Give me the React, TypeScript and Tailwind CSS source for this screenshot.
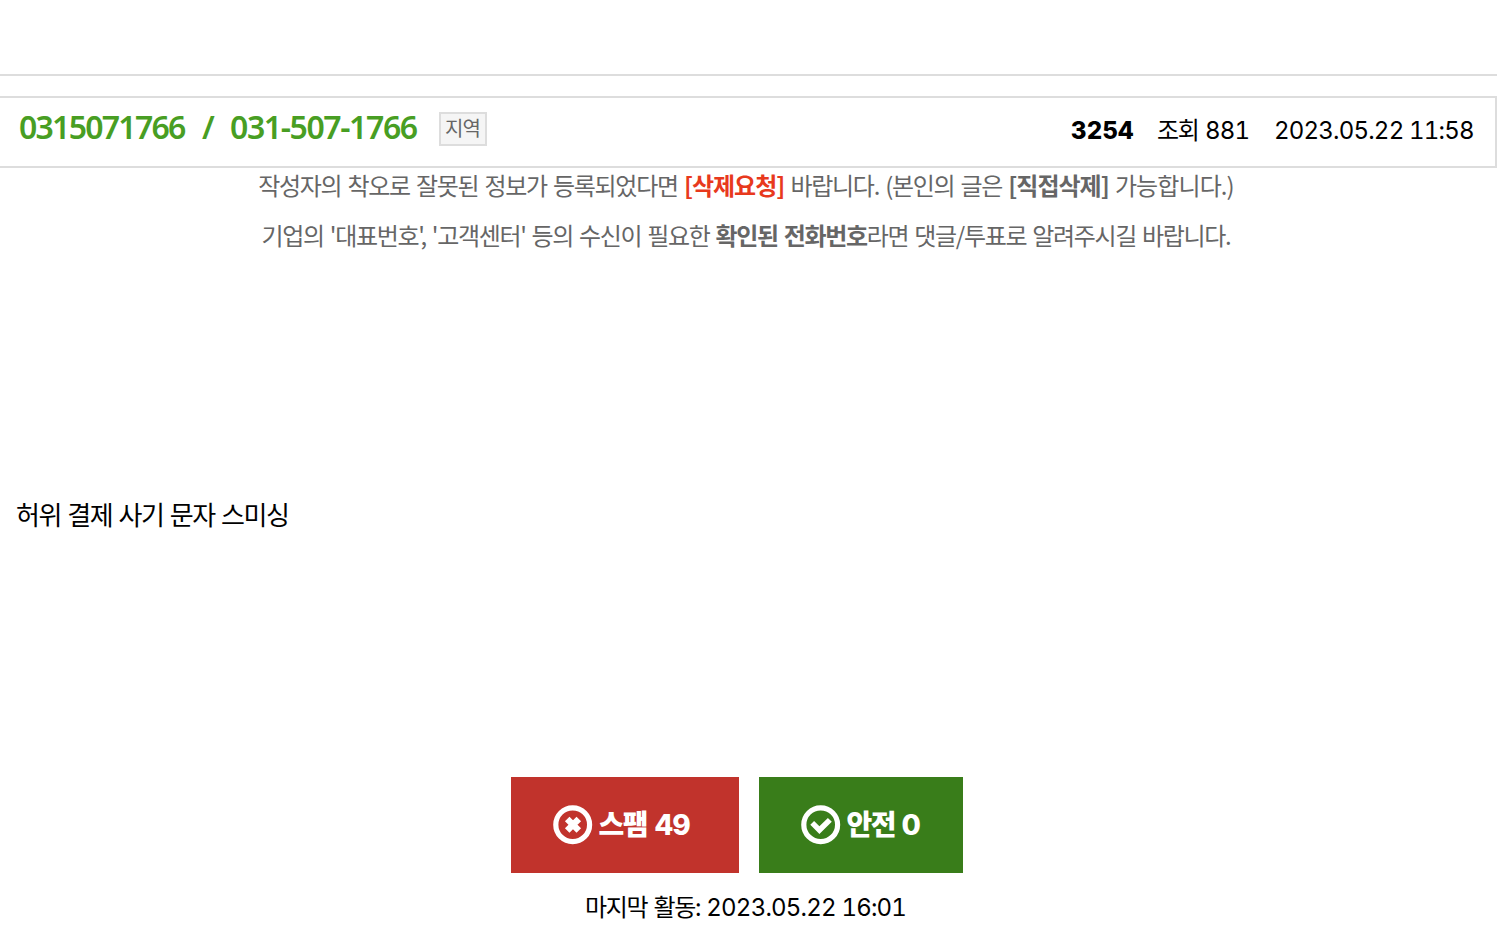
import type { ReactNode } from 'react';

const post = {
  number: '0315071766',
  formatted: '031-507-1766',
  region: '지역',
  id: '3254',
  views: '881',
  date: '2023.05.22 11:58',
  content: '허위 결제 사기 문자 스미싱',
  lastActivity: '2023.05.22 16:01',
};

function VoteIcon({ children }: { children: ReactNode }) {
  return (
    <svg width="40" height="40" viewBox="0 0 40 40" fill="none" className="shrink-0">
      <circle cx="19.7" cy="19.7" r="16.9" stroke="white" strokeWidth="5.2" />
      {children}
    </svg>
  );
}

export default function App() {
  return (
    <div className="h-[948px] overflow-hidden bg-white pr-[11px] font-['Inter','Noto_Sans_CJK_KR',sans-serif] text-2xl text-black">
      <div className="h-[76px] border-b-2 border-[#dddddd]" />

      <header className="mt-5 flex h-[72px] items-start justify-between border-y-2 border-r-2 border-[#dddddd] pl-[19px] pr-5">
        <div className="flex items-start">
          <h1 className="flex pt-[9px] font-['Noto_Sans',sans-serif] text-[32px] leading-10 font-semibold whitespace-nowrap text-[#489e23]">
            <span className="w-[183px] tracking-[-1.75px]">{post.number}</span>
            <span className="w-[28px]">/</span>
            <span className="w-[209px] tracking-[-1.4px]">{post.formatted}</span>
          </h1>
          <span className="mt-[14px] flex h-[34px] w-12 items-center justify-center border-2 border-[#dddddd] bg-[#f5f5f5] pr-px text-xl leading-none tracking-[-1px] whitespace-nowrap text-[#666666]">
            {post.region}
          </span>
        </div>
        <div className="flex pt-[17px] leading-8 whitespace-nowrap tabular-nums">
          <strong className="w-[86px] font-extrabold tracking-[0.2px]">{post.id}</strong>
          <span className="w-[117px] tracking-[-0.8px]">
            <span className="tracking-[-1.3px] [word-spacing:1.2px]">조회 </span>{post.views}
          </span>
          <time className="w-[201px] tracking-[-0.8px]">{post.date}</time>
        </div>
      </header>

      <div className="flex flex-col items-center pr-[5px] font-['Noto_Sans_CJK_KR',sans-serif] leading-[50px] tracking-[-1.3px] whitespace-nowrap text-[#666666] [word-spacing:1.8px]">
        <p className="-mt-2 [word-spacing:2.1px]">
          작성자의 착오로 잘못된 정보가 등록되었다면 <b className="tracking-[-1px] text-[#e8391d]">[삭제요청]</b> 바랍니다. (본인의 글은 <b className="tracking-[-1px]">[직접삭제]</b> <span className="tracking-[-0.9px]">가능합니다.)</span>
        </p>
        <p>
          기업의 '대표번호', '고객센터' 등의 수신이 필요한 <b>확인된 전화번호</b>라면 댓글/투표로 알려주시길 바랍니다.
        </p>
      </div>

      <p className="mt-[234px] pl-4 font-['Noto_Sans_CJK_KR',sans-serif] text-[26px] leading-10 tracking-[-1.4px] [word-spacing:1.8px]">{post.content}</p>

      <div className="mt-[243px] flex gap-5 pl-[511px] text-[28px] font-extrabold whitespace-nowrap text-white">
        <button className="flex h-24 w-[228px] items-center gap-1.5 bg-[#c1332c] pl-[41.5px]">
          <VoteIcon>
            <path d="M14.2 13.9l11.6 11.6M25.8 13.9L14.2 25.5" stroke="white" strokeWidth="6.4" />
          </VoteIcon>
          <span className="pt-0.5 tracking-[-1.5px] [word-spacing:2.5px]">
            스팸 <span className="tracking-[-1.2px]">49</span>
          </span>
        </button>
        <button className="flex h-24 w-[204px] items-center gap-1.5 bg-[#397d1a] pl-[41.5px]">
          <VoteIcon>
            <path d="M9.3 19.8l3.8-3.7 5.3 5.2 8.5-8.4 3.9 3.8-12.4 12.2z" fill="white" />
          </VoteIcon>
          <span className="pt-0.5 tracking-[-1.5px] [word-spacing:1.8px]">안전 0</span>
        </button>
      </div>

      <p className="mt-[15px] pl-[585px] leading-10 whitespace-nowrap tabular-nums">
        <span className="tracking-[-1.3px] [word-spacing:1px]">마지막 활동: </span>
        <span className="tracking-[-0.8px]">{post.lastActivity}</span>
      </p>
    </div>
  );
}
